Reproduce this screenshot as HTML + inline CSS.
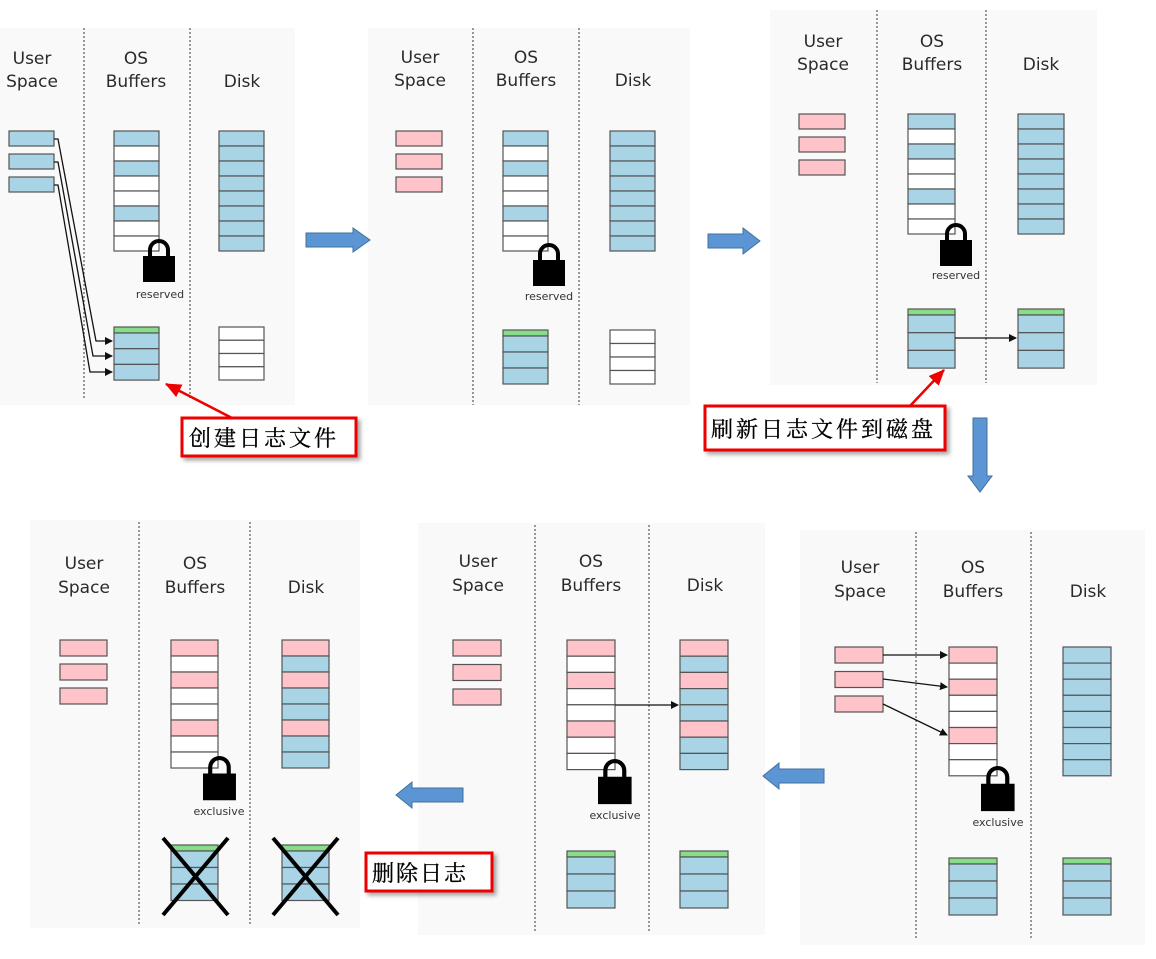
<!DOCTYPE html>
<html><head><meta charset="utf-8">
<style>
html,body{margin:0;padding:0;background:#fff;width:1156px;height:959px;overflow:hidden}
svg{position:absolute;left:0;top:0}
.l{font-family:"DejaVu Sans","Liberation Sans",sans-serif;font-size:17px;fill:#2a2a2a;text-anchor:middle}
.s{font-family:"DejaVu Sans","Liberation Sans",sans-serif;font-size:11px;fill:#333;text-anchor:middle}
.c{font-family:"Liberation Serif","Noto Serif CJK SC",serif;font-size:22px;fill:#000;letter-spacing:3px;stroke:#000;stroke-width:0.3}
</style></head><body>
<svg id="s" width="1156" height="959" viewBox="0 0 1156 959">
<defs>
<marker id="ah" markerWidth="8" markerHeight="8" refX="7" refY="4" orient="auto" markerUnits="userSpaceOnUse"><path d="M0,0 L8,4 L0,8 Z" fill="#111"/></marker>
<marker id="rh" markerWidth="16" markerHeight="14" refX="15" refY="7" orient="auto" markerUnits="userSpaceOnUse"><path d="M0,0 L16,7 L0,14 Z" fill="#e00"/></marker>
<filter id="sh" x="-10%" y="-10%" width="130%" height="140%"><feDropShadow dx="3" dy="3" stdDeviation="2" flood-color="#000" flood-opacity="0.35"/></filter>
</defs>
<g id="bg" fill="#f9f9f9">
<rect x="0" y="28" width="295" height="377"/>
<rect x="368" y="28" width="322" height="377"/>
<rect x="770" y="10" width="327" height="375"/>
<rect x="800" y="530" width="345" height="415"/>
<rect x="418" y="523" width="347" height="412"/>
<rect x="30" y="520" width="330" height="408"/>
</g>
<g id="dots" stroke="#777" stroke-width="1.5" stroke-dasharray="2,2">
<line x1="84" y1="28" x2="84" y2="400"/><line x1="190" y1="28" x2="190" y2="400"/>
<line x1="473" y1="28" x2="473" y2="405"/><line x1="579" y1="28" x2="579" y2="405"/>
<line x1="877" y1="10" x2="877" y2="383"/><line x1="986" y1="10" x2="986" y2="383"/>
<line x1="916" y1="532" x2="916" y2="940"/><line x1="1031" y1="532" x2="1031" y2="940"/>
<line x1="535" y1="525" x2="535" y2="933"/><line x1="649" y1="525" x2="649" y2="933"/>
<line x1="139" y1="522" x2="139" y2="925"/><line x1="250" y1="522" x2="250" y2="925"/>
</g>
<g id="labels">
<text class="l" x="32" y="64">User</text><text class="l" x="32" y="87">Space</text>
<text class="l" x="136" y="64">OS</text><text class="l" x="136" y="87">Buffers</text>
<text class="l" x="242" y="87">Disk</text>
<text class="l" x="420" y="63">User</text><text class="l" x="420" y="86">Space</text>
<text class="l" x="526" y="63">OS</text><text class="l" x="526" y="86">Buffers</text>
<text class="l" x="633" y="86">Disk</text>
<text class="l" x="823" y="47">User</text><text class="l" x="823" y="70">Space</text>
<text class="l" x="932" y="47">OS</text><text class="l" x="932" y="70">Buffers</text>
<text class="l" x="1041" y="70">Disk</text>
<text class="l" x="860" y="573">User</text><text class="l" x="860" y="597">Space</text>
<text class="l" x="973" y="573">OS</text><text class="l" x="973" y="597">Buffers</text>
<text class="l" x="1088" y="597">Disk</text>
<text class="l" x="478" y="567">User</text><text class="l" x="478" y="591">Space</text>
<text class="l" x="591" y="567">OS</text><text class="l" x="591" y="591">Buffers</text>
<text class="l" x="705" y="591">Disk</text>
<text class="l" x="84" y="569">User</text><text class="l" x="84" y="593">Space</text>
<text class="l" x="195" y="569">OS</text><text class="l" x="195" y="593">Buffers</text>
<text class="l" x="306" y="593">Disk</text>
<text class="s" x="160" y="298">reserved</text>
<text class="s" x="549" y="300">reserved</text>
<text class="s" x="956" y="279">reserved</text>
<text class="s" x="998" y="826">exclusive</text>
<text class="s" x="615" y="819">exclusive</text>
<text class="s" x="219" y="815">exclusive</text>
</g>
<g id="gen"></g>
<g id="arrows" stroke="#111" stroke-width="1.3" fill="none">
<polyline points="54,139 58,139 96,341 112,341" marker-end="url(#ah)"/>
<polyline points="54,162 58,162 93,356 112,356" marker-end="url(#ah)"/>
<polyline points="54,185 58,185 90,372 112,372" marker-end="url(#ah)"/>
<line x1="955" y1="338" x2="1016" y2="338" marker-end="url(#ah)"/>
<line x1="883" y1="655" x2="947" y2="655" marker-end="url(#ah)"/>
<line x1="883" y1="679" x2="947" y2="687" marker-end="url(#ah)"/>
<line x1="883" y1="704" x2="947" y2="735" marker-end="url(#ah)"/>
<line x1="615" y1="705" x2="678" y2="705" marker-end="url(#ah)"/>
</g>
<g id="bluearrows" fill="#5b95d3" stroke="#41719c" stroke-width="1">
<path d="M306,233 H353 V228 L370,240 L353,252 V247 H306 Z"/>
<path d="M708,234 H743 V228 L760,241 L743,254 V248 H708 Z"/>
<path d="M973,418 H987 V476 H992 L980,492 L968,476 H973 Z"/>
<path d="M824,769 H779 V763 L763,776 L779,789 V783 H824 Z"/>
<path d="M463,788 H412 V782 L396,795 L412,808 V802 H463 Z"/>
</g>
<g stroke="#e00" stroke-width="2.5">
<line x1="232" y1="418" x2="166" y2="384" marker-end="url(#rh)"/>
<line x1="910" y1="406" x2="944" y2="370" marker-end="url(#rh)"/>
</g>
<g filter="url(#sh)" fill="#fff" stroke="#e00" stroke-width="3">
<rect x="182" y="418" width="174" height="38"/>
<rect x="705" y="406" width="240" height="44"/>
<rect x="366" y="853" width="126" height="38"/>
</g>
<text class="c" x="189" y="446">创建日志文件</text>
<text class="c" x="711" y="437">刷新日志文件到磁盘</text>
<text class="c" x="372" y="881" style="letter-spacing:2px">删除日志</text>
</svg>
<script>
var g=document.getElementById('gen'),NS='http://www.w3.org/2000/svg';
var C={b:'#a8d4e6',w:'#ffffff',p:'#fec4c9',g:'#88dd88'};
function R(x,y,w,h,f){var r=document.createElementNS(NS,'rect');r.setAttribute('x',x);r.setAttribute('y',y);r.setAttribute('width',w);r.setAttribute('height',h);r.setAttribute('fill',C[f]);r.setAttribute('stroke','#555');r.setAttribute('stroke-width','1.2');g.appendChild(r);}
function col(x,y,w,h,s){for(var i=0;i<s.length;i++)R(x,y+i*h,w,h,s[i]);}
function user(x,y,w,h,gap,f){for(var i=0;i<3;i++)R(x,y+i*gap,w,h,f);}
function log(x,y,w,h,f){R(x,y,w,6,'g');col(x,y+6,w,h,f);}
function lock(x,y,s){var p=document.createElementNS(NS,'path');var w=32*s;
p.setAttribute('d','M'+x+','+(y+16*s)+' h'+w+' v'+(26*s)+' h-'+w+' Z');p.setAttribute('fill','#000');g.appendChild(p);
var a=document.createElementNS(NS,'path');a.setAttribute('d','M'+(x+7*s)+','+(y+17*s)+' V'+(y+10*s)+' A'+(9*s)+','+(9*s)+' 0 0 1 '+(x+25*s)+','+(y+10*s)+' V'+(y+17*s));a.setAttribute('fill','none');a.setAttribute('stroke','#000');a.setAttribute('stroke-width',4*s);g.appendChild(a);}
function X(x1,y1,x2,y2){var l=document.createElementNS(NS,'path');l.setAttribute('d','M'+x1+','+y1+' L'+x2+','+y2+' M'+x2+','+y1+' L'+x1+','+y2);l.setAttribute('stroke','#000');l.setAttribute('stroke-width','4');g.appendChild(l);}
var os=['b','w','b','w','w','b','w','w'],all='bbbbbbbb',opk=['p','w','p','w','w','p','w','w'],dmix=['p','b','p','b','b','p','b','b'];
user(9,131,45,15,23,'b');col(114,131,45,15,os);col(219,131,45,15,all);lock(143,240,1);log(114,327,45,15.7,'bbb');col(219,327,45,13.25,'wwww');
user(396,131,46,15,23,'p');col(503,131,45,15,os);col(610,131,45,15,all);lock(533,244,1);log(503,330,45,16,'bbb');col(610,330,45,13.5,'wwww');
user(799,114,46,15,23,'p');col(908,114,47,15,os);col(1018,114,46,15,all);lock(940,224,1);log(908,309,47,17.7,'bbb');log(1018,309,46,17.7,'bbb');
user(835,647,48,16,24.5,'p');col(949,647,48,16.1,opk);col(1063,647,48,16.1,all);lock(981,767,1.05);log(949,858,48,17,'bbb');log(1063,858,48,17,'bbb');
user(453,640,48,16,24.5,'p');col(567,640,48,16.2,opk);col(680,640,48,16.2,dmix);lock(598,760,1.05);log(567,851,48,17,'bbb');log(680,851,48,17,'bbb');
user(60,640,47,16,24,'p');col(171,640,47,16,opk);col(282,640,47,16,dmix);lock(203,757,1.03);log(171,845,47,16.5,'bbb');log(282,845,47,16.5,'bbb');
X(163,838,228,915);X(273,838,338,915);
</script>
</body></html>
